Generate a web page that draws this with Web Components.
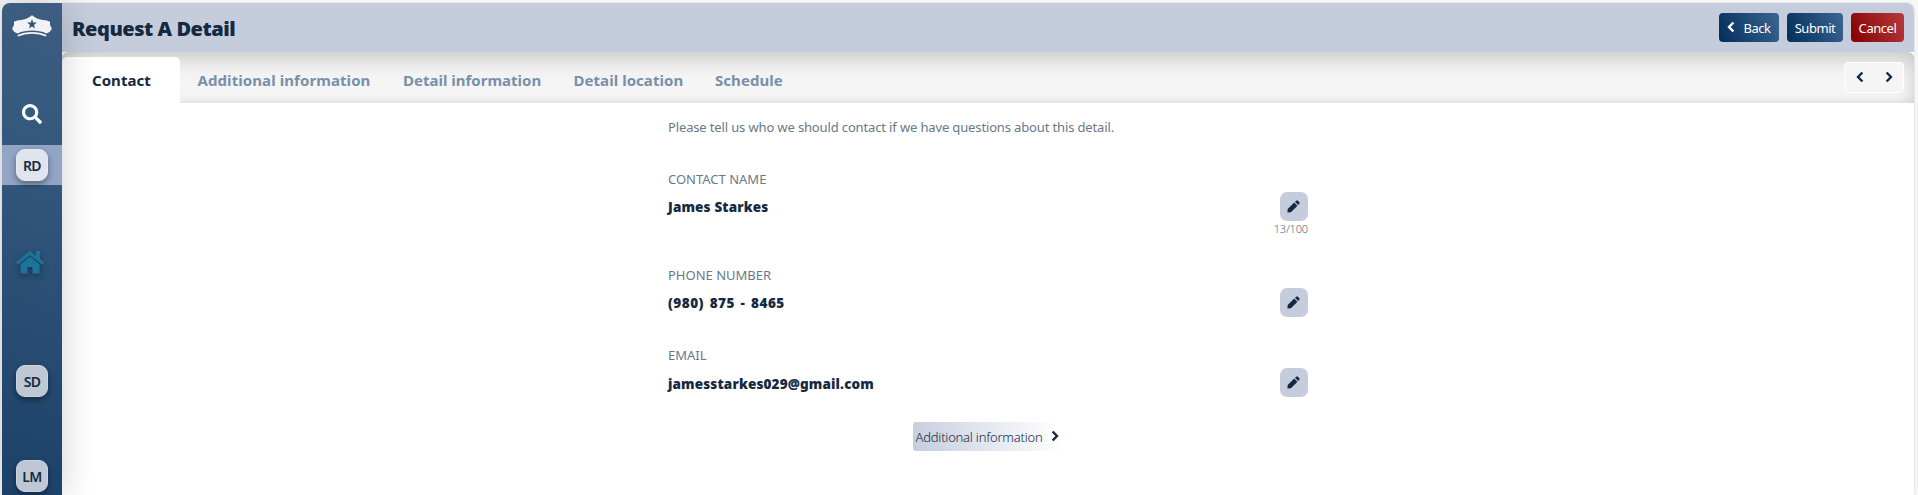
<!DOCTYPE html>
<html lang="en">
<head>
<meta charset="utf-8">
<title>Request A Detail</title>
<style>
html,body{margin:0;height:100%;overflow:hidden;background:#f6f6f6}
body{font-family:"Noto Sans","Open Sans",sans-serif;color:#152a42}
</style>
</head>
<body>
<detail-app></detail-app>
<script>
const ICONS={
 left:['0 0 10 16','<path d="M8 2 2.5 8 8 14" fill="none" stroke="currentColor" stroke-width="3"/>'],
 right:['0 0 10 16','<path d="M2 2 7.5 8 2 14" fill="none" stroke="currentColor" stroke-width="3"/>'],
 search:['0 0 512 512','<path fill="currentColor" d="M505 442.700 405.300 343c-4.500-4.500-10.600-7-17-7H372c27.600-35.300 44-79.700 44-128C416 93.100 322.900 0 208 0S0 93.100 0 208s93.100 208 208 208c48.300 0 92.700-16.400 128-44v16.300c0 6.400 2.500 12.500 7 17l99.700 99.700c9.400 9.400 24.600 9.400 33.900 0l28.300-28.300c9.400-9.400 9.400-24.600.1-34zM208 336c-70.700 0-128-57.200-128-128 0-70.700 57.200-128 128-128 70.700 0 128 57.200 128 128 0 70.700-57.200 128-128 128z"/>'],
 home:['0 0 28 23','<path fill="currentColor" d="M14 0 0 11.300 1.800 13.700 14 4 26.200 13.700 28 11.300 24 8V0h-4v5z"/><path fill="currentColor" d="M14 5.600 4.500 13.200V22.500h7V16h5v6.500h7V13.200z"/>'],
 pencil:['0 0 14 14','<path fill="currentColor" d="M.5 13.500.7 9.800 7.800 2.700 11.300 6.200 4.200 13.300zM8.600 1.900 10 .7q.9-.7 1.700 0L13.300 2.300q.7.800 0 1.700L12.100 5.400z"/>'],
 cap:['0 0 40 22','<path fill="#f2f3f4" d="M20 .2C17 2.800 13 4.500 9 5 6.500 5.300 4 5.600 2.200 6.500L1.800 10.500.3 13C.2 15.500 2.500 17.500 5.500 18.600 10 16.300 15 15.600 20 15.600s10 .7 14.500 3C37.500 17.500 39.800 15.500 39.700 13L38.200 10.500 37.800 6.500C36 5.600 33.500 5.300 31 5 27 4.500 23 2.800 20 .2z"/><path fill="none" stroke="#f2f3f4" stroke-width="1.800" d="M5.800 20.700C14 16.900 26 16.900 34.200 20.700"/><path fill="#315579" d="m20 4 1.200 3.500 3.700.1-2.900 2.300 1 3.600-3-2.100-3 2.100 1-3.600-2.900-2.300 3.700-.1z"/>']
};
const define=(name,html,init)=>customElements.define(name,class extends HTMLElement{
 connectedCallback(){
  if(this.shadowRoot)return;
  const t=document.createElement('template');
  t.innerHTML=html;
  this.attachShadow({mode:'open'}).append(t.content.cloneNode(true));
  if(init)init(this,this.shadowRoot);
 }
});

define('app-icon','<style>:host{display:block;flex:none}svg{display:block;width:100%;height:100%}</style><svg preserveAspectRatio="none"></svg>',(el,r)=>{
 const [box,body]=ICONS[el.getAttribute('name')],s=r.querySelector('svg');
 s.setAttribute('viewBox',box);s.innerHTML=body;
});

define('side-badge',`<style>
:host{display:flex;flex:none;align-items:center;justify-content:center;height:40px;width:60px;box-sizing:border-box}
:host([active]){background:#93a5c5}
div{width:32px;height:32px;border-radius:9px;box-sizing:border-box;border:1px solid #cbd3dc;background:#bec8d4;display:flex;align-items:center;justify-content:center;font:600 14px/18px "Noto Sans",sans-serif;letter-spacing:-.6px;padding-top:2px;box-shadow:0 3px 6px #0006}
:host([active]) div{background:#dfe4ee;border-color:#e7ebf2}
</style><div><slot></slot></div>`);

define('side-bar',`<style>
:host{display:flex;flex:none;flex-direction:column;width:60px;background:linear-gradient(200deg,#3d5d82 0%,#34587d 30%,#1c4169 100%);box-shadow:0 0 36px #00000030;position:relative;z-index:2;align-items:center;border-radius:8px 0 0 0}
.cap{width:40px;height:22px;margin-top:12px}
.search{width:20px;height:20px;margin-top:67px;color:#fff}
.rd{margin-top:21px}
.home{width:28px;height:23px;color:#19769a;margin:66px 4px 0 0;filter:drop-shadow(0 3px 3px #0005)}
.sd{margin-top:87px}.lm{margin-top:55px}
</style><app-icon class="cap" name="cap"></app-icon><app-icon class="search" name="search"></app-icon>
<side-badge class="rd" active>RD</side-badge><app-icon class="home" name="home"></app-icon>
<side-badge class="sd">SD</side-badge><side-badge class="lm">LM</side-badge>`);

define('action-button',`<style>
:host{display:flex;align-items:center;justify-content:center;height:29px;box-sizing:border-box;border-radius:4px;background:linear-gradient(65deg,#032e5c,#3b6592);color:#fff;font-size:13px;line-height:20px;letter-spacing:-.45px;white-space:nowrap;padding-top:1px}
:host([danger]){background:linear-gradient(65deg,#850000,#b73a3c)}
</style><slot></slot>`);

define('page-header',`<style>
:host{display:flex;height:49px;background:#c5cddd;align-items:center;padding:0 10px;border-radius:0 8px 0 0;box-sizing:border-box}
h1{margin:0;flex:1;font-size:20px;line-height:28px;font-weight:900;letter-spacing:-.46px;padding-top:2px}
.actions{display:flex;gap:8px}
.b{width:60px}.s{width:56px}.c{width:53px}
app-icon{width:8px;height:12px;margin-right:8px;margin-top:-3px}
</style><h1>Request A Detail</h1><div class="actions"><action-button class="b"><app-icon name="left"></app-icon>Back</action-button><action-button class="s">Submit</action-button><action-button class="c" danger>Cancel</action-button></div>`);

define('tab-item',`<style>
:host{display:block;font-size:15px;line-height:22px;font-weight:700;color:#7890aa;padding-top:12px;box-sizing:border-box;height:46px;white-space:nowrap;letter-spacing:.05px}
:host([active]){background:#fff;color:#152a42;width:118px;padding-left:30px;border-radius:5px 5px 0 0}
</style><slot></slot>`);

define('tab-bar',`<style>
:host{display:flex;height:51px;box-sizing:border-box;padding:5px 10px 0 0;background:#f5f5f5;box-shadow:inset 0 8px 22px -2px #0003,inset 0 -4px 8px -4px #0001;border-radius:6px 6px 0 0}
.a{width:205.500px;margin-left:17.500px;letter-spacing:.08px}.b{width:170.500px;letter-spacing:0}.c{width:141.500px}.d{flex:1}
.nav{box-sizing:border-box;width:60px;height:31px;margin-top:5px;border:1px solid #fff;border-radius:4px;background:#f5f5f5;display:flex;align-items:center;justify-content:center;gap:21px;padding:0 0 1px 0}
.nav app-icon{width:8px;height:12px}
</style><tab-item active>Contact</tab-item><tab-item class="a">Additional information</tab-item><tab-item class="b">Detail information</tab-item><tab-item class="c">Detail location</tab-item><tab-item class="d">Schedule</tab-item><div class="nav"><app-icon name="left"></app-icon><app-icon name="right"></app-icon></div>`);

define('form-field',`<style>
:host{display:grid;grid-template-columns:1fr auto;grid-template-rows:18px 29px auto;row-gap:4px}
.label{grid-column:1/3;font-size:13px;line-height:18px;color:#6a7889;text-transform:uppercase}
.value{font-size:13.500px;line-height:var(--line,31px);height:29px;font-weight:900;letter-spacing:var(--track,.15px);word-spacing:var(--gap,0)}
.edit{width:28px;height:29px;border-radius:7px;background:#c5cddd;display:flex;align-items:center;justify-content:center}
.edit app-icon{width:13px;height:13px;margin-right:1px}
.count{grid-column:1/3;text-align:right;font-size:11px;line-height:14px;margin:-3px 0 3px;font-weight:300;letter-spacing:-.15px;color:#56657a}
</style><div class="label"></div><div class="value"><slot></slot></div><div class="edit"><app-icon name="pencil"></app-icon></div><div class="count"></div>`,(el,r)=>{
 r.querySelector('.label').textContent=el.getAttribute('label');
 const c=r.querySelector('.count');
 el.hasAttribute('count')?c.textContent=el.getAttribute('count'):c.remove();
});

define('contact-form',`<style>
:host{display:flex;flex-direction:column;width:640px;margin-left:606px;padding-top:14px}
p{margin:0;font-size:13px;line-height:20px;letter-spacing:-.14px;color:#6a7889;white-space:nowrap}
.f1{margin-top:33px}.f2{margin-top:27px;--track:.5px;--gap:1.7px}.f3{margin-top:25px;--line:33px}
.next{align-self:flex-start;margin:21px 0 0 245px;display:flex;align-items:center;width:150px;height:29px;box-sizing:border-box;padding-left:2.500px;border-radius:3px;background:linear-gradient(75deg,#c5cddd,#fff 96%);font-size:13px;letter-spacing:-.22px;white-space:nowrap}
.next span{width:127px;font-weight:300;padding-top:1px}
.next app-icon{width:8px;height:12px;margin-left:8px;margin-top:-1px}
</style><p>Please tell us who we should contact if we have questions about this detail.</p>
<form-field class="f1" label="Contact name" count="13/100">James Starkes</form-field>
<form-field class="f2" label="Phone number">(980) 875 - 8465</form-field>
<form-field class="f3" label="Email">jamesstarkes029@gmail.com</form-field>
<div class="next"><span>Additional information</span><app-icon name="right"></app-icon></div>`);

define('detail-app',`<style>
:host{display:flex;height:100vh;box-sizing:border-box;padding:3px 4px 0 2px}
main{flex:1;background:#fff;border-radius:0 8px 0 0;box-shadow:0 0 2px #0003;min-width:0}
</style><side-bar></side-bar><main><page-header></page-header><tab-bar></tab-bar><contact-form></contact-form></main>`);
</script>
</body>
</html>
